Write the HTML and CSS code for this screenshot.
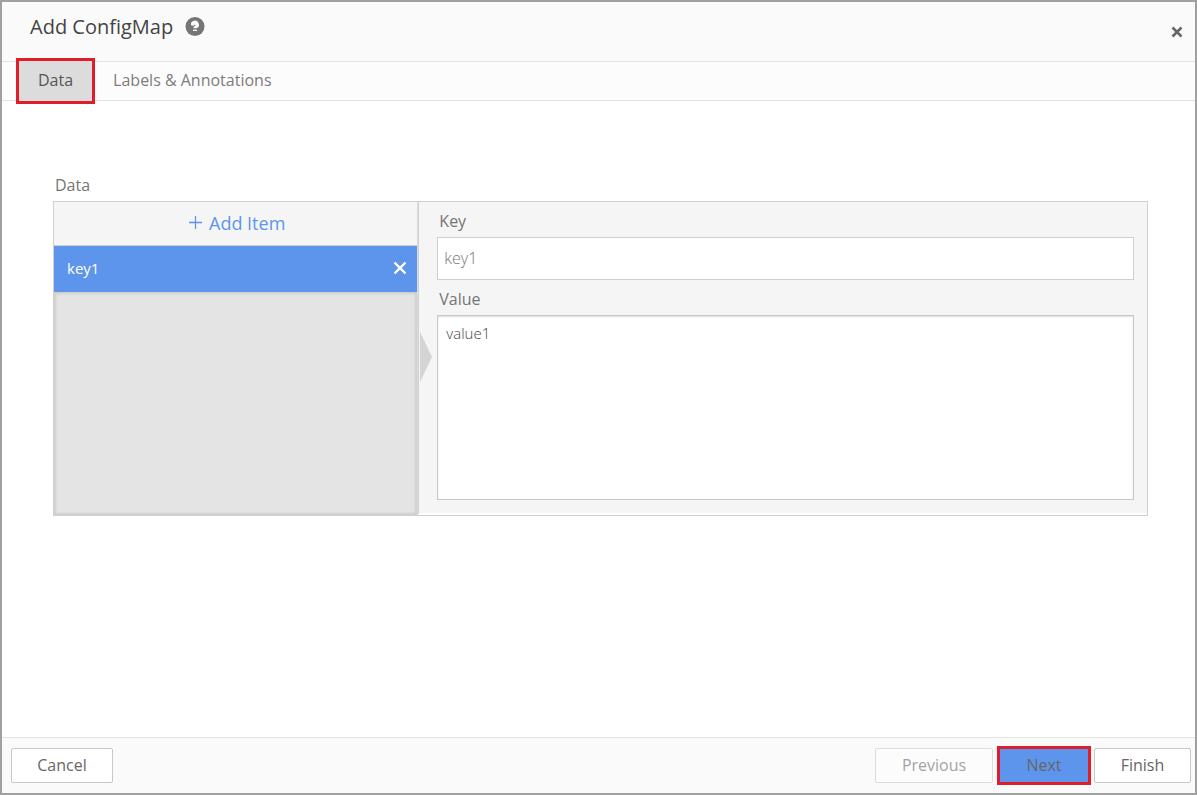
FILE: index.html
```html
<!DOCTYPE html>
<html lang="en">
<head>
<meta charset="utf-8">
<title>Add ConfigMap</title>
<link rel="stylesheet" href="styles.css">
</head>
<body>
<div class="dialog">
  <header class="header">
    <h1 class="title">Add ConfigMap</h1>
    <button class="help" type="button" aria-label="Help">
      <svg width="20" height="20" viewBox="0 0 20 20"><circle cx="10" cy="9.5" r="9.5" fill="#757575"/><path d="M6 8.2A4 4 0 1 1 11.5 11.3L8.6 11.3V9.8L10.6 8.6L9.8 7.4L8.6 8.8Z" fill="#fafafa"/><path d="M8 13.3H12" stroke="#fafafa" stroke-width="1.3"/></svg>
    </button>
    <button class="close" type="button" aria-label="Close">
      <svg width="12" height="12" viewBox="0 0 12 12"><path d="M1.5 1.5L10.5 10.5M10.5 1.5L1.5 10.5" stroke="#666" stroke-width="2.6"/></svg>
    </button>
  </header>
  <nav class="tabs">
    <button class="tab tab-active" type="button">Data</button>
    <button class="tab" type="button">Labels &amp; Annotations</button>
  </nav>
  <main class="content">
    <h2 class="section-label">Data</h2>
    <div class="editor">
      <div class="list">
        <button class="add" type="button">
          <svg width="13" height="13" viewBox="0 0 13 13"><path d="M0 6.5H13M6.5 0V13" stroke="#5e95ec" stroke-width="1.3"/></svg>
          Add Item
        </button>
        <div class="item">
          <span>key1</span>
          <button class="remove" type="button" aria-label="Remove key1">
            <svg width="14" height="14" viewBox="0 0 14 14"><path d="M1.5 1.5L12.5 12.5M12.5 1.5L1.5 12.5" stroke="#fff" stroke-width="2.4"/></svg>
          </button>
        </div>
        <div class="empty"></div>
      </div>
      <div class="form">
        <svg class="arrow" width="12" height="50" viewBox="0 0 12 50"><path d="M0 0L12 25L0 50Z" fill="#d4d4d4"/></svg>
        <label class="label" for="key">Key</label>
        <input class="field" id="key" type="text" value="key1">
        <label class="label" for="value">Value</label>
        <textarea class="field area" id="value">value1</textarea>
      </div>
    </div>
  </main>
  <footer class="footer">
    <button class="btn cancel" type="button">Cancel</button>
    <button class="btn previous" type="button" disabled>Previous</button>
    <button class="btn next" type="button">Next</button>
    <button class="btn" type="button">Finish</button>
  </footer>
</div>
</body>
</html>
```
FILE: styles.css
```css
* { box-sizing: border-box; }
body { margin: 0; font-family: "Open Sans", sans-serif; font-size: 16px; line-height: 22px; color: #757575; }
button, input, textarea { font: inherit; color: inherit; }
button { padding: 0; border: 0; background: none; }
svg { display: block; }

.dialog { display: flex; flex-direction: column; min-height: 100vh; border: 2px solid #a0a0a0; background: #fff; }

.header { display: flex; align-items: flex-start; height: 60px; padding: 11px 12px 0 28px; border-bottom: 1px solid #e2e2e2; background: #fafafa; }
.title { margin: 0; font-size: 20px; line-height: 28px; font-weight: 400; color: #444; }
.help { margin: 4px 0 0 12px; }
.close { margin: 13px 0 0 auto; }

.tabs { display: flex; height: 39px; padding-left: 17px; border-bottom: 1px solid #e2e2e2; background: #fcfcfc; }
.tab { padding: 0 21px 2px; color: #7d7d7d; }
.tab-active { height: 40px; margin-top: -1px; padding: 0 19px 2px; background: #dcdcdc; color: #555; outline: 3px solid #e01e2b; }

.content { flex: 1; padding: 73px 47px 0 51px; }
.section-label { margin: 0 2px 5px; font-size: 16px; line-height: 22px; font-weight: 400; }
.editor { display: grid; grid-template-columns: 1fr 2fr; min-height: 315px; border: 1px solid #d0d0d0; }
.list { display: flex; flex-direction: column; border-right: 1px solid #dcdcdc; background: #f5f5f5; }
.add { display: flex; align-items: center; justify-content: center; gap: 7px; height: 44px; padding: 0 0 2px 3px; border-bottom: 1px solid #d0d0d0; font-size: 18px; color: #5e95ec; }
.item { display: flex; align-items: center; justify-content: space-between; height: 46px; padding: 0 10px 2px 13px; background: #5e95ec; color: #fff; font-size: 15px; }
.empty { flex: 1; border: 1px solid #d0d0d0; background: #e4e4e4; box-shadow: inset 0 0 3px #bbb; }

.form { position: relative; display: flex; flex-direction: column; padding: 8px 13px 13px 18px; border-bottom: 2px solid #fff; border-left: 1px solid #d0d0d0; background: #f5f5f5; }
.arrow { position: absolute; left: 1px; top: 130px; }
.label { margin: 0 2px 5px; }
.field { width: 100%; border: 1px solid #cfcfcf; border-radius: 0; background: #fff; outline: 0; font-weight: 300; }
input.field { height: 43px; margin-bottom: 8px; padding: 0 6px 2px; }
.area { height: 185px; padding: 6px 8px; border-color: #c8c8c8; font-size: 15px; color: #444; box-shadow: inset 0 1px 2px #ddd; resize: none; }

.footer { display: flex; gap: 5px; padding: 10px 4px 10px 9px; border-top: 1px solid #e2e2e2; background: #fafafa; }
.btn { height: 35px; min-width: 97px; padding: 0 25px 2px; border: 1px solid #c8c8c8; border-radius: 2px; background: #fff; color: #666; }
.cancel { min-width: 102px; margin-right: auto; }
.previous { min-width: 118px; border-color: #dcdcdc; background: #fcfcfc; color: #a3a3a3; }
.next { min-width: 90px; margin-left: 1px; border-color: #5e95ec; border-radius: 0; background: #5e95ec; outline: 3px solid #e01e2b; outline-offset: -1px; }
```
